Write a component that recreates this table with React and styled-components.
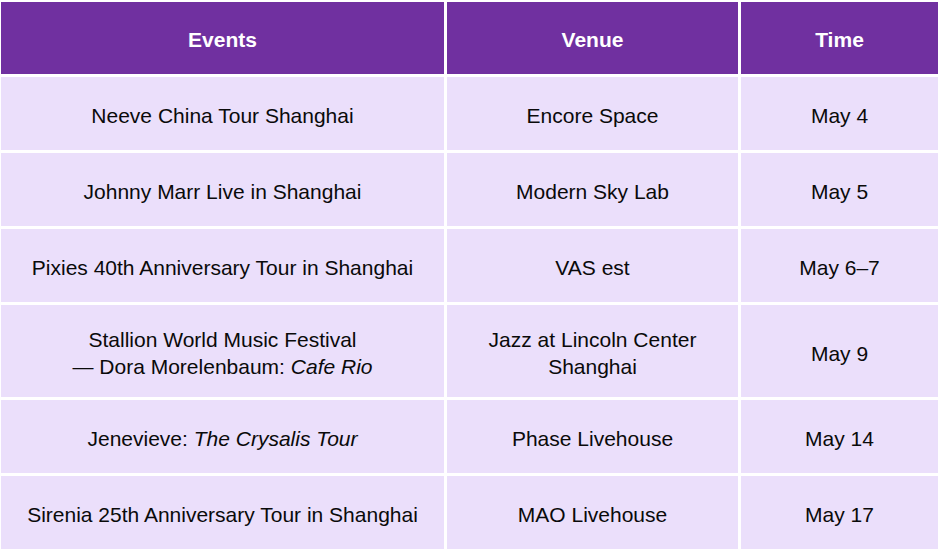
import React from 'react';
import styled, { createGlobalStyle } from 'styled-components';

const GlobalStyle = createGlobalStyle`
    body {
        margin: 0;
        background: #ffffff;
        font-family: "Liberation Sans", Arial, sans-serif;
    }
`;

const Page = styled.div`
    width: 940px;
    height: 552px;
    padding: 2px 2px 3px 1px;
    box-sizing: border-box;
    background: #ffffff;
`;

const Grid = styled.div`
    display: grid;
    grid-template-columns: 443px 291px 197px;
    grid-template-rows: 72px 73px 73px 73px 92px 73px 73px;
    gap: 3px;
`;

const HeadCell = styled.div`
    display: flex;
    align-items: center;
    justify-content: center;
    padding-top: 3px;
    background: #7030a0;
    color: #ffffff;
    font-weight: bold;
    font-size: 21px;
`;

const Cell = styled.div`
    display: flex;
    align-items: center;
    justify-content: center;
    padding-top: 4px;
    text-align: center;
    background: #ebdffb;
    color: #0a0a0a;
    font-size: 21px;
    line-height: 27px;
`;

const events = [
    { event: 'Neeve China Tour Shanghai', venue: 'Encore Space', time: 'May 4' },
    { event: 'Johnny Marr Live in Shanghai', venue: 'Modern Sky Lab', time: 'May 5' },
    { event: 'Pixies 40th Anniversary Tour in Shanghai', venue: 'VAS est', time: 'May 6–7' },
    {
        event: (
            <>
                Stallion World Music Festival
                <br />
                — Dora Morelenbaum: <i>Cafe Rio</i>
            </>
        ),
        venue: (
            <>
                Jazz at Lincoln Center
                <br />
                Shanghai
            </>
        ),
        time: 'May 9',
    },
    {
        event: (
            <>
                Jenevieve: <i>The Crysalis Tour</i>
            </>
        ),
        venue: 'Phase Livehouse',
        time: 'May 14',
    },
    { event: 'Sirenia 25th Anniversary Tour in Shanghai', venue: 'MAO Livehouse', time: 'May 17' },
];

function App() {
    return (
        <Page>
            <GlobalStyle />
            <Grid>
                <HeadCell>Events</HeadCell>
                <HeadCell>Venue</HeadCell>
                <HeadCell>Time</HeadCell>
                {events.map((row, i) => (
                    <React.Fragment key={i}>
                        <Cell><span>{row.event}</span></Cell>
                        <Cell><span>{row.venue}</span></Cell>
                        <Cell><span>{row.time}</span></Cell>
                    </React.Fragment>
                ))}
            </Grid>
        </Page>
    );
}

export default App;
